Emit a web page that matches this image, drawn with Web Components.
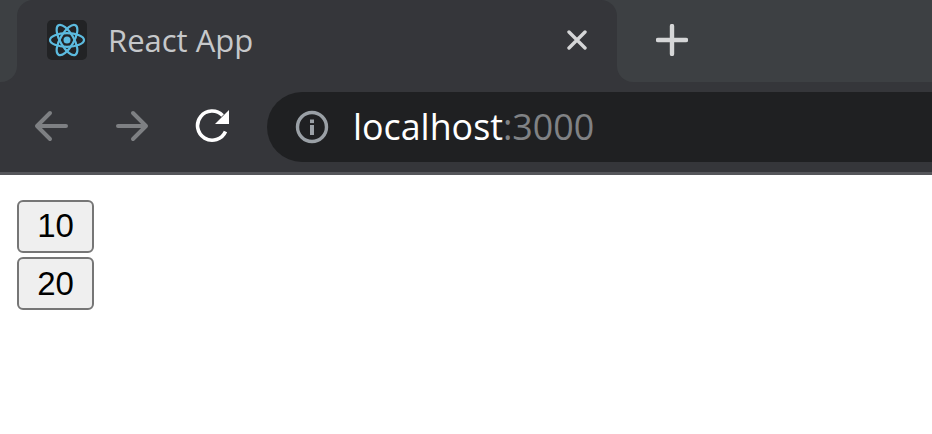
<!DOCTYPE html>
<html>
<head>
<meta charset="utf-8">
<title>React App</title>
<style>
html, body { margin: 0; padding: 0; background: #fff; }
</style>
</head>
<body>
<browser-frame>
    <browser-tab title="React App"></browser-tab>
    <address-bar slot="address" host="localhost" port=":3000"></address-bar>
</browser-frame>
<counter-list>
    <counter-button>10</counter-button>
    <counter-button>20</counter-button>
</counter-list>

<script>
// tab strip, toolbar and the line under them
class BrowserFrame extends HTMLElement {
    constructor() {
        super()
        this.attachShadow({ mode: 'open' })
    }

    connectedCallback() {
        this.shadowRoot.innerHTML = /* html */ `
            <style>
            :host {
                display: block;
                --strip: #3d4043;
                --tab: #35363a;
            }
            .strip {
                display: flex;
                height: 82px;
                background: linear-gradient(var(--strip) 50%, var(--tab) 50%);
            }
            .edge-left {
                width: 17px;
                background: var(--strip);
                border-bottom-right-radius: 16px;
            }
            .edge-right {
                flex: 1;
                display: flex;
                align-items: center;
                padding: 0 0 2px 39px;
                box-sizing: border-box;
                background: var(--strip);
                border-bottom-left-radius: 16px;
            }
            .toolbar {
                display: flex;
                align-items: center;
                height: 93px;
                padding-left: 33px;
                box-sizing: border-box;
                background: var(--tab);
                border-bottom: 3px solid #55565a;
            }
            .nav { display: block; flex: none; margin: 0 44px 2px 0; }
            .nav.fwd { margin-right: 46px; }
            .nav.reload { margin-right: 36px; }
            </style>
            <div class="strip">
                <div class="edge-left"></div>
                <slot></slot>
                <div class="edge-right">
                    <svg width="32" height="32" viewBox="0 0 32 32">
                        <path d="M16 2v28M2 16h28" stroke="#d5d6d7" stroke-width="4.4" stroke-linecap="round" fill="none"/>
                    </svg>
                </div>
            </div>
            <div class="toolbar">
                <svg class="nav" width="36" height="36" viewBox="0 0 36 36" fill="none" stroke="#7e8083" stroke-width="4" stroke-linecap="round" stroke-linejoin="round">
                    <path d="M33 18H5M17 5 4 18l13 13"/>
                </svg>
                <svg class="nav fwd" width="36" height="36" viewBox="0 0 36 36" fill="none" stroke="#7e8083" stroke-width="4" stroke-linecap="round" stroke-linejoin="round">
                    <path d="M5 18h27M20 5l13 13-13 13"/>
                </svg>
                <svg class="nav reload" width="36" height="36" viewBox="0 0 36 36">
                    <path d="M30.5 23.5A14.6 14.6 0 1 1 27.6 7.4" fill="none" stroke="#fff" stroke-width="3.6"/>
                    <path d="M34 2v14H20z" fill="#fff"/>
                </svg>
                <slot name="address"></slot>
            </div>
        `
    }
}

class BrowserTab extends HTMLElement {
    constructor() {
        super()
        this.attachShadow({ mode: 'open' })
    }

    connectedCallback() {
        this.shadowRoot.innerHTML = /* html */ `
            <style>
            :host {
                display: flex;
                align-items: center;
                width: 600px;
                height: 82px;
                box-sizing: border-box;
                padding: 0 30px 2px 30px;
                background: #35363a;
                border-radius: 16px 16px 0 0;
            }
            .favicon {
                display: flex;
                align-items: center;
                justify-content: center;
                width: 40px;
                height: 40px;
                border-radius: 5px;
                background: #222325;
                flex: none;
            }
            .title {
                flex: 1;
                margin-left: 21px;
                font: 31px/40px "Open Sans", "Noto Sans", sans-serif;
                color: #c6c8ca;
                white-space: nowrap;
            }
            </style>
            <div class="favicon">
                <svg width="38" height="34" viewBox="-19 -17 38 34" fill="none" stroke="#5cbbdf" stroke-width="2.2">
                    <ellipse rx="17" ry="6.8"/>
                    <ellipse rx="17" ry="6.8" transform="rotate(60)"/>
                    <ellipse rx="17" ry="6.8" transform="rotate(120)"/>
                    <circle r="3.5" fill="#5cbbdf" stroke="none"/>
                </svg>
            </div>
            <div class="title">${this.getAttribute('title')}</div>
            <svg width="20" height="20" viewBox="0 0 20 20">
                <path d="M2 2l16 16M18 2 2 18" stroke="#d5d6d7" stroke-width="3.4" stroke-linecap="round" fill="none"/>
            </svg>
        `
    }
}

class AddressBar extends HTMLElement {
    constructor() {
        super()
        this.attachShadow({ mode: 'open' })
    }

    connectedCallback() {
        this.shadowRoot.innerHTML = /* html */ `
            <style>
            :host {
                display: flex;
                align-items: center;
                flex: 1;
                height: 70px;
                padding-left: 28px;
                box-sizing: border-box;
                background: #1f2022;
                border-radius: 35px 0 0 35px;
            }
            .url {
                margin: 0 0 3px 24px;
                font: 35.8px/44px "Open Sans", "Noto Sans", sans-serif;
                color: #fff;
                white-space: nowrap;
            }
            .url span { color: #808285; }
            </style>
            <svg width="34" height="34" viewBox="0 0 34 34">
                <circle cx="17" cy="17" r="14.5" fill="none" stroke="#9aa0a6" stroke-width="3.4"/>
                <rect x="15" y="15" width="4" height="10" fill="#9aa0a6"/>
                <rect x="15" y="9.5" width="4" height="3.6" fill="#9aa0a6"/>
            </svg>
            <div class="url">${this.getAttribute('host')}<span>${this.getAttribute('port')}</span></div>
        `
    }
}

class CounterList extends HTMLElement {
    constructor() {
        super()
        this.attachShadow({ mode: 'open' })
    }

    connectedCallback() {
        this.shadowRoot.innerHTML = /* html */ `
            <style>
            :host {
                display: flex;
                flex-direction: column;
                align-items: flex-start;
                gap: 4px;
                padding: 25px 0 0 17px;
            }
            </style>
            <slot></slot>
        `
    }
}

class CounterButton extends HTMLElement {
    constructor() {
        super()
        this.attachShadow({ mode: 'open' })
    }

    connectedCallback() {
        this.shadowRoot.innerHTML = /* html */ `
            <style>
            :host { display: block; }
            button {
                display: block;
                width: 77px;
                height: 53px;
                padding: 0;
                box-sizing: border-box;
                border: 2px solid #767676;
                border-radius: 6px;
                background: #efefef;
                color: #000;
                font: 33px "Liberation Sans", Arial, sans-serif;
            }
            :host(:first-child) button { padding-bottom: 2px; }
            </style>
            <button><slot></slot></button>
        `
    }
}

customElements.define('browser-frame', BrowserFrame)
customElements.define('browser-tab', BrowserTab)
customElements.define('address-bar', AddressBar)
customElements.define('counter-list', CounterList)
customElements.define('counter-button', CounterButton)
</script>
</body>
</html>
